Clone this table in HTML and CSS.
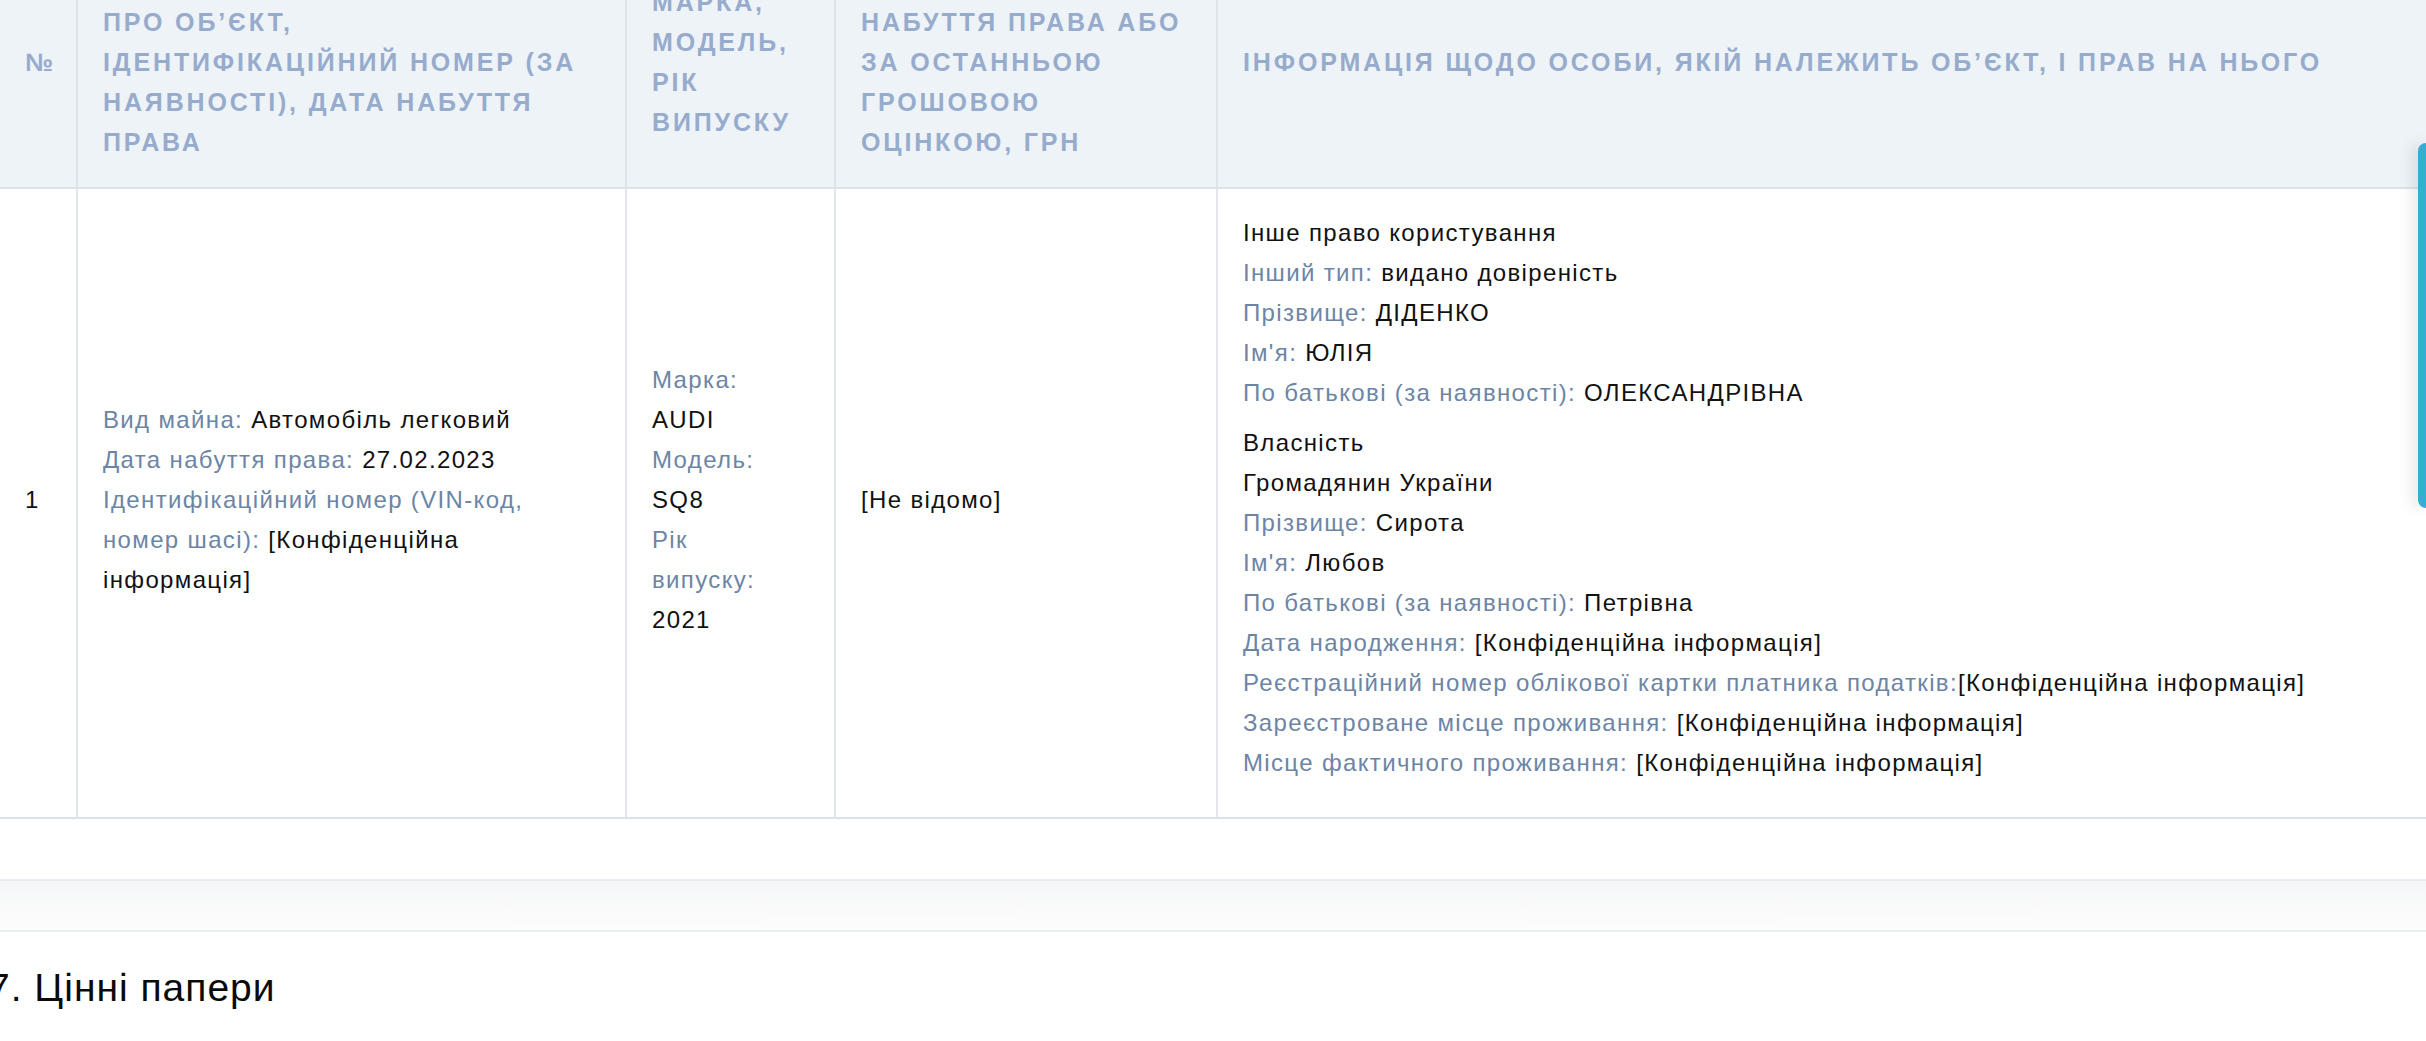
FILE: index.html
```html
<!DOCTYPE html>
<html lang="uk">
<head>
<meta charset="utf-8">
<title>6. Транспортні засоби</title>
<link rel="stylesheet" href="styles.css">
</head>
<body>
<div class="page">
  <div class="panel">
    <table class="assets">
      <colgroup>
        <col class="c-num">
        <col class="c-obj">
        <col class="c-model">
        <col class="c-cost">
        <col class="c-owner">
      </colgroup>
      <thead>
        <tr>
          <th>№</th>
          <th class="th-obj">Інформація<br>про об’єкт, ідентифікаційний номер (за наявності), дата набуття права</th>
          <th class="th-model">Марка, модель, рік випуску</th>
          <th>Вартість на дату набуття права або за останньою грошовою оцінкою, грн</th>
          <th>Інформація щодо особи, якій належить об’єкт, і прав на нього</th>
        </tr>
      </thead>
      <tbody>
        <tr>
          <td>1</td>
          <td class="td-obj">
            <div><span class="label">Вид майна:</span> Автомобіль легковий</div>
            <div><span class="label">Дата набуття права:</span> 27.02.2023</div>
            <div><span class="label">Ідентифікаційний номер (VIN-код, номер шасі):</span> [Конфіденційна інформація]</div>
          </td>
          <td class="td-model">
            <div class="label">Марка:</div>
            <div>AUDI</div>
            <div class="label">Модель:</div>
            <div>SQ8</div>
            <div class="label">Рік випуску:</div>
            <div>2021</div>
          </td>
          <td>[Не відомо]</td>
          <td class="td-owner">
            <div class="block">
              <div>Інше право користування</div>
              <div><span class="label">Інший тип:</span> видано довіреність</div>
              <div><span class="label">Прізвище:</span> ДІДЕНКО</div>
              <div><span class="label">Ім'я:</span> ЮЛІЯ</div>
              <div><span class="label">По батькові (за наявності):</span> ОЛЕКСАНДРІВНА</div>
            </div>
            <div class="block">
              <div>Власність</div>
              <div>Громадянин України</div>
              <div><span class="label">Прізвище:</span> Сирота</div>
              <div><span class="label">Ім'я:</span> Любов</div>
              <div><span class="label">По батькові (за наявності):</span> Петрівна</div>
              <div><span class="label">Дата народження:</span> [Конфіденційна інформація]</div>
              <div><span class="label">Реєстраційний номер облікової картки платника податків:</span>[Конфіденційна інформація]</div>
              <div><span class="label">Зареєстроване місце проживання:</span> [Конфіденційна інформація]</div>
              <div><span class="label">Місце фактичного проживання:</span> [Конфіденційна інформація]</div>
            </div>
          </td>
        </tr>
      </tbody>
    </table>
    <div class="panel-footer"></div>
  </div>
  <h2 class="section-title">7. Цінні папери</h2>
</div>
<div class="side-tab"></div>
</body>
</html>
```
FILE: styles.css
```css
html, body {
  margin: 0;
  padding: 0;
}

body {
  width: 2426px;
  height: 1041px;
  overflow: hidden;
  background: #ffffff;
  font-family: "Liberation Sans", Arial, sans-serif;
  color: #111111;
}

.page {
  margin-top: -63px;
}

.assets {
  width: 2440px;
  border-collapse: collapse;
  table-layout: fixed;
}

.c-num { width: 77px; }
.c-obj { width: 549px; }
.c-model { width: 209px; }
.c-cost { width: 382px; }

.assets th {
  background: #eef3f8;
  color: #97accc;
  font-weight: 700;
  font-size: 25px;
  letter-spacing: 2.85px;
  text-transform: uppercase;
  text-align: left;
  line-height: 40px;
  padding: 25px;
  border-right: 2px solid #dfe4ea;
  border-bottom: 2px solid #dde2e8;
  vertical-align: middle;
}

.assets th.th-obj { padding-right: 40px; }

.assets td {
  font-size: 24px;
  letter-spacing: 1.35px;
  line-height: 40px;
  color: #111111;
  padding: 24px 25px 30px;
  border-right: 2px solid #e3e7ec;
  border-bottom: 2px solid #dde2e8;
  vertical-align: middle;
}

.assets td.td-obj { padding-right: 40px; }
.assets td.td-model { padding-right: 45px; }
.assets td.td-owner { padding-bottom: 24px; }

.label {
  color: #6d85a5;
}

.block {
  margin-bottom: 10px;
}

.panel-footer {
  margin-top: 60px;
  height: 49px;
  border-top: 2px solid #e9edf1;
  border-bottom: 2px solid #e9edf1;
  background: linear-gradient(#f5f6f7, #fdfdfd);
}

.section-title {
  margin: 32px 0 0 -12px;
  font-size: 39px;
  font-weight: 400;
  line-height: 47px;
  letter-spacing: 1px;
  color: #0a0a0a;
}

.side-tab {
  position: fixed;
  right: -4px;
  top: 143px;
  width: 12px;
  height: 365px;
  background: #35aed3;
  border-radius: 8px 0 0 8px;
  box-shadow: -6px 0 14px rgba(0, 0, 0, 0.10);
}
```
